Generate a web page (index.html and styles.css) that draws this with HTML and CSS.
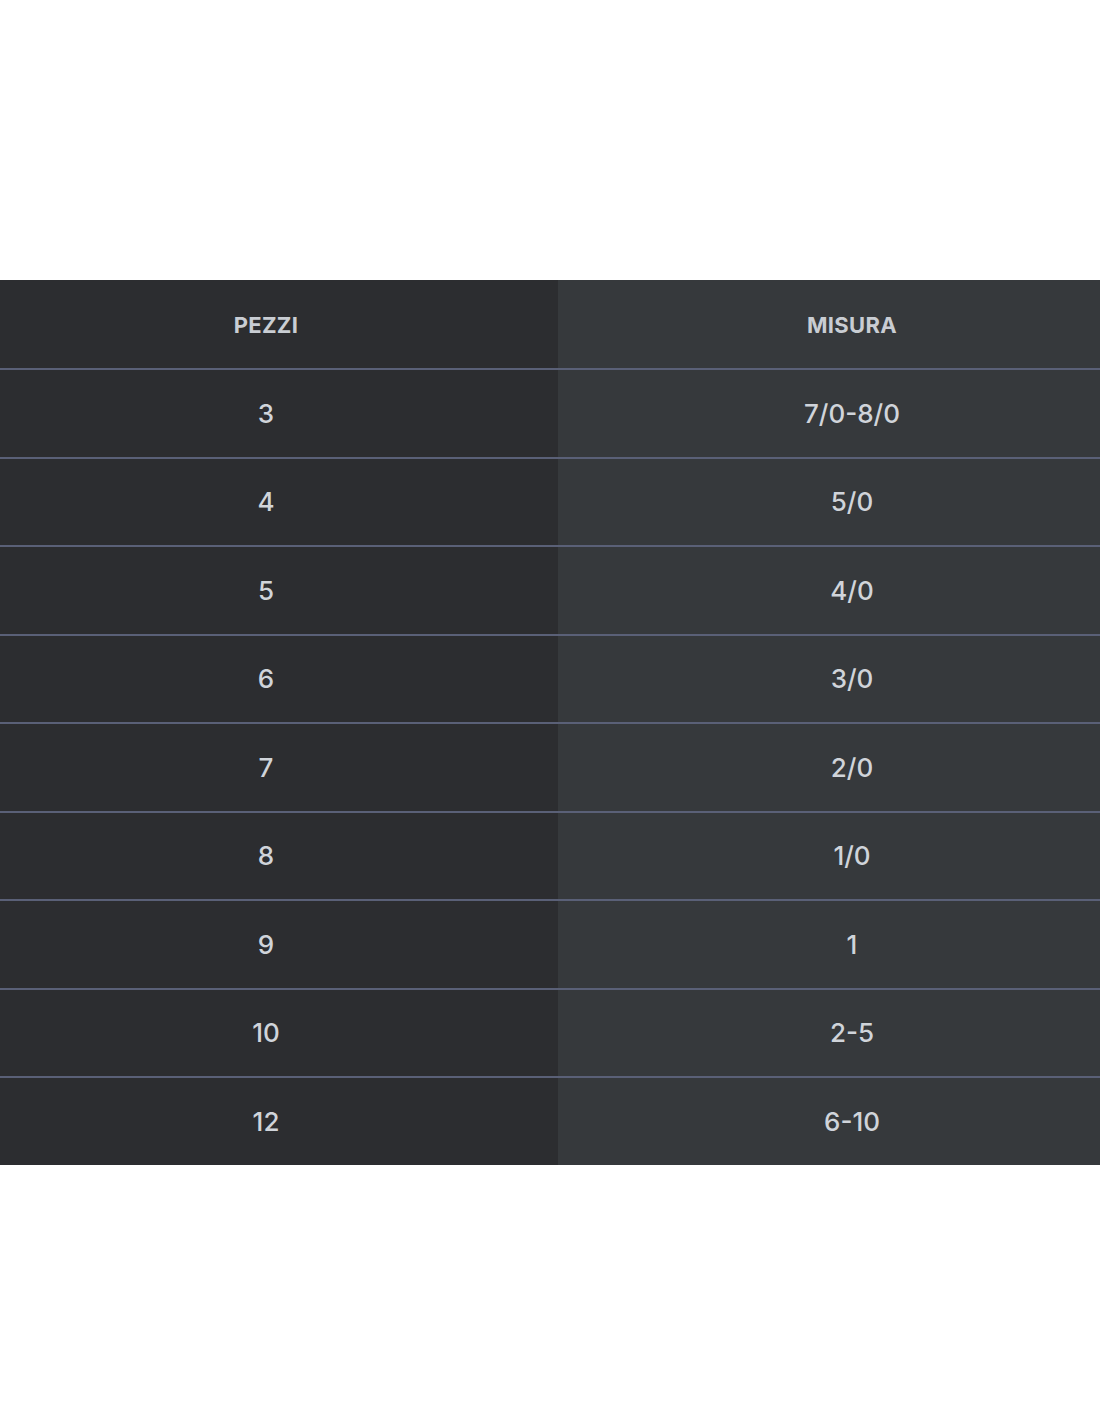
FILE: index.html
```html
<!DOCTYPE html>
<html>
<head>
<meta charset="utf-8">
<link rel="stylesheet" href="styles.css">
</head>
<body>
<div class="table">
  <div class="row head"><div class="cell c1">PEZZI</div><div class="cell c2">MISURA</div></div>
  <div class="row"><div class="cell c1">3</div><div class="cell c2">7/0-8/0</div></div>
  <div class="row"><div class="cell c1">4</div><div class="cell c2">5/0</div></div>
  <div class="row"><div class="cell c1">5</div><div class="cell c2">4/0</div></div>
  <div class="row"><div class="cell c1">6</div><div class="cell c2">3/0</div></div>
  <div class="row"><div class="cell c1">7</div><div class="cell c2">2/0</div></div>
  <div class="row"><div class="cell c1">8</div><div class="cell c2">1/0</div></div>
  <div class="row"><div class="cell c1">9</div><div class="cell c2">1</div></div>
  <div class="row"><div class="cell c1">10</div><div class="cell c2">2-5</div></div>
  <div class="row last"><div class="cell c1">12</div><div class="cell c2">6-10</div></div>
</div>
</body>
</html>
```
FILE: styles.css
```css
html, body {
  margin: 0;
  padding: 0;
  background: #ffffff;
}
body {
  padding-top: 280px;
  font-family: "Inter", "Open Sans", sans-serif;
}
.table {
  display: flex;
  flex-direction: column;
  width: 1100px;
}
.row {
  display: grid;
  grid-template-columns: 558px 542px;
  height: 88.5px;
  box-sizing: border-box;
  border-bottom: 2px solid #5a6077;
}
.row.head {
  height: 90px;
}
.row.last {
  height: 87px;
  border-bottom: none;
}
.cell {
  display: flex;
  align-items: center;
  justify-content: center;
  box-sizing: border-box;
  color: #d0d4da;
  font-size: 26px;
  font-weight: 500;
}
.c1 {
  background: #2c2d30;
  padding-right: 26px;
}
.c2 {
  background: #36393c;
  padding-left: 46px;
}
.head .cell {
  font-size: 22px;
  font-weight: 700;
  color: #c9cdd3;
  letter-spacing: 0.3px;
  padding-top: 2px;
}
```
